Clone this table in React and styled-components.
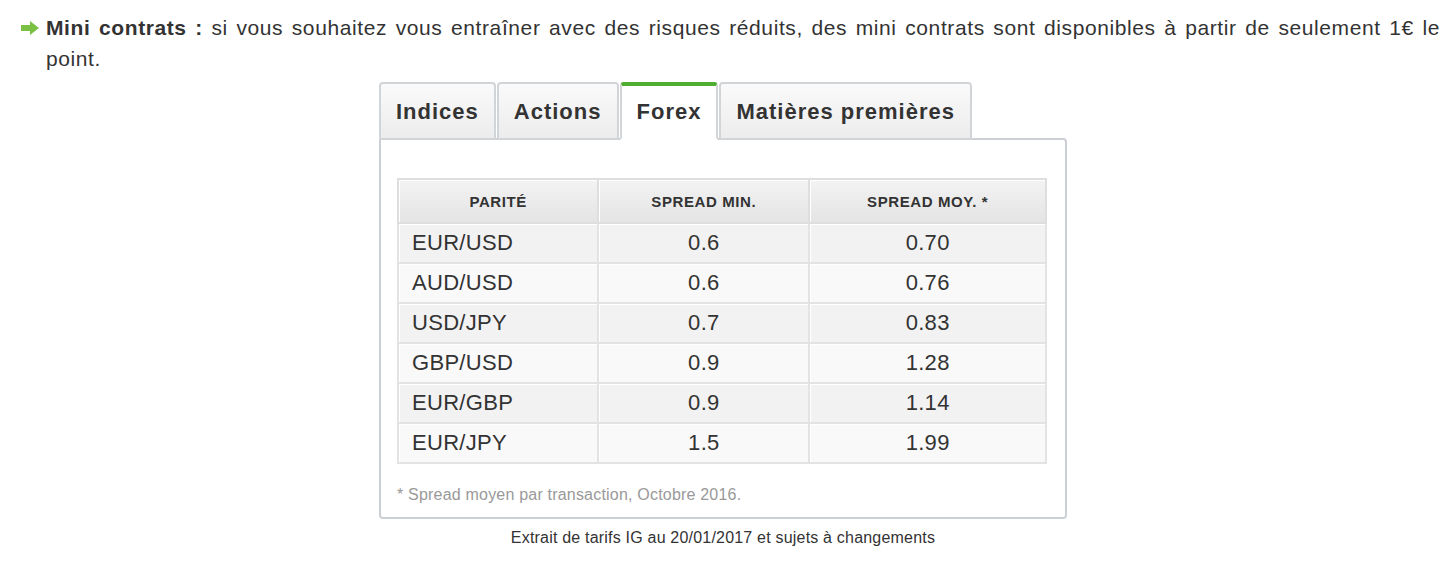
import React from "react";
import styled, { createGlobalStyle } from "styled-components";

const Global = createGlobalStyle`
  html, body { margin: 0; padding: 0; background: #fff; }
  body { font-family: "Liberation Sans", Arial, sans-serif; color: #333; }
`;

const Page = styled.div`
  padding: 12px 13px 0 6px;
`;

const Bullet = styled.p`
  position: relative;
  margin: 0;
  padding-left: 40px;
  font-size: 21px;
  letter-spacing: 0.6px;
  line-height: 31px;
  text-align: justify;
  color: #333;
`;

const Lead = styled.strong`
  font-weight: bold;
`;

const Arrow = styled.svg`
  position: absolute;
  left: 15px;
  top: 9px;
`;

const Figure = styled.div`
  width: 688px;
  margin: 8px auto 0;
`;

const TabBar = styled.div`
  display: flex;
  gap: 1px;
  margin-bottom: -2px;
  position: relative;
  z-index: 1;
`;

const Tab = styled.div`
  height: 52px;
  padding: ${(p) => (p.$active ? 0 : 2)}px 15px 0;
  display: flex;
  align-items: center;
  justify-content: center;
  font-size: 22px;
  letter-spacing: 1px;
  font-weight: bold;
  color: #333;
  border: 2px solid #d2d5d8;
  border-bottom: ${(p) => (p.$active ? "2px solid #fff" : "2px solid #d2d5d8")};
  border-top: ${(p) => (p.$active ? "4px solid #4fad2f" : "2px solid #d2d5d8")};
  border-radius: 4px 4px 0 0;
  background: ${(p) =>
    p.$active ? "#fff" : "linear-gradient(#fafafa, #ececec)"};
`;

const Panel = styled.div`
  border: 2px solid #ccd0d4;
  border-radius: 0 4px 4px 4px;
  padding: 38px 18px 13px 16px;
`;

const Table = styled.table`
  width: 650px;
  border-collapse: collapse;
  border: 2px solid #e2e2e2;
  color: #333;
`;

const Th = styled.th`
  height: 42px;
  padding: 0;
  font-size: 15px;
  letter-spacing: 0.6px;
  font-weight: bold;
  text-transform: uppercase;
  background: linear-gradient(#f3f3f3, #e4e4e4);
  border: 2px solid #dedede;
  box-shadow: inset 1px 1px 0 #fff;
  width: ${(p) => p.$w}px;
`;

const Td = styled.td`
  height: 38px;
  padding: 0 0 0 ${(p) => (p.$left ? 13 : 0)}px;
  font-size: 22px;
  letter-spacing: 0.3px;
  text-align: ${(p) => (p.$left ? "left" : "center")};
  background: ${(p) => (p.$odd ? "#f2f2f2" : "#f9f9f9")};
  border: 2px solid #e3e3e3;
  box-shadow: inset 1px 1px 0 #fff;
`;

const Note = styled.div`
  margin-top: 22px;
  font-size: 16px;
  letter-spacing: 0.2px;
  color: #999;
`;

const Caption = styled.div`
  text-align: center;
  margin-top: 10px;
  font-size: 16px;
  letter-spacing: 0.2px;
  color: #333;
`;

const rows = [
  ["EUR/USD", "0.6", "0.70"],
  ["AUD/USD", "0.6", "0.76"],
  ["USD/JPY", "0.7", "0.83"],
  ["GBP/USD", "0.9", "1.28"],
  ["EUR/GBP", "0.9", "1.14"],
  ["EUR/JPY", "1.5", "1.99"],
];

const tabs = ["Indices", "Actions", "Forex", "Matières premières"];

export default function App() {
  return (
    <Page>
      <Global />
      <Bullet>
        <Arrow width="18" height="14" viewBox="0 0 18 14">
          <path d="M0 4h9V0l9 7-9 7V10H0z" fill="#7ac143" />
        </Arrow>
        <Lead>Mini contrats :</Lead> si vous souhaitez vous entraîner avec des
        risques réduits, des mini contrats sont disponibles à partir de
        seulement 1€ le point.
      </Bullet>
      <Figure>
        <TabBar>
          {tabs.map((t) => (
            <Tab key={t} $active={t === "Forex"}>
              {t}
            </Tab>
          ))}
        </TabBar>
        <Panel>
          <Table>
            <thead>
              <tr>
                <Th $w={200}>Parité</Th>
                <Th $w={212}>Spread min.</Th>
                <Th $w={238}>Spread moy. *</Th>
              </tr>
            </thead>
            <tbody>
              {rows.map((r, i) => (
                <tr key={r[0]}>
                  <Td $left $odd={i % 2 === 0}>{r[0]}</Td>
                  <Td $odd={i % 2 === 0}>{r[1]}</Td>
                  <Td $odd={i % 2 === 0}>{r[2]}</Td>
                </tr>
              ))}
            </tbody>
          </Table>
          <Note>* Spread moyen par transaction, Octobre 2016.</Note>
        </Panel>
        <Caption>Extrait de tarifs IG au 20/01/2017 et sujets à changements</Caption>
      </Figure>
    </Page>
  );
}
